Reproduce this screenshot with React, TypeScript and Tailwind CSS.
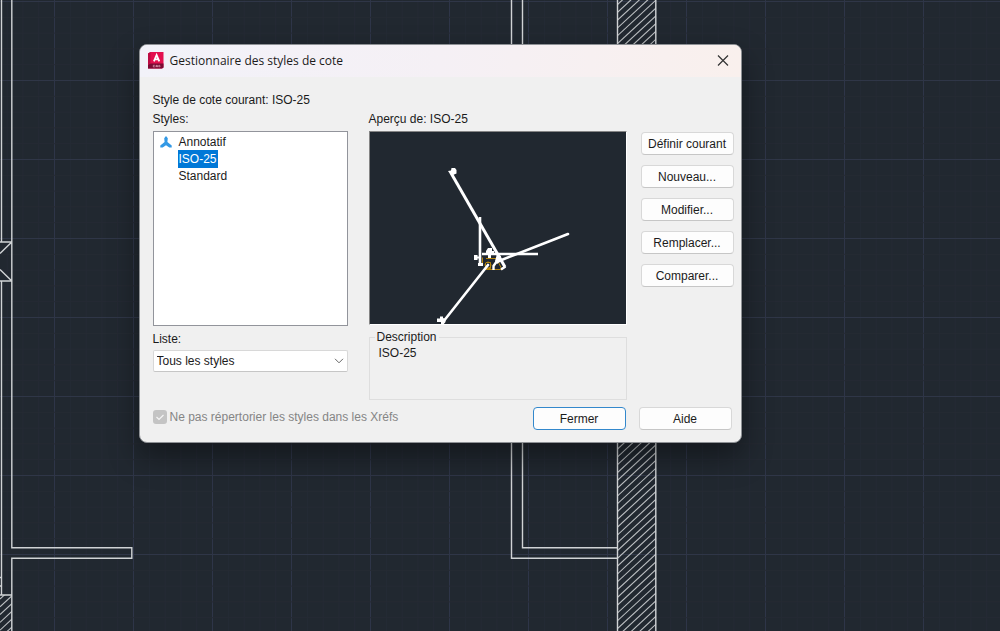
import { ReactNode } from "react";

const cols = Array.from({ length: 66 }, (_, i) => ({ at: -24.5 + i * 15.8, major: i % 5 === 0 }));
const rows = Array.from({ length: 42 }, (_, i) => ({ at: 1.5 + i * 15.8, major: i % 5 === 0 }));
const hatchLines = Array.from({ length: 86 }, (_, i) => i * 7.8);

function Drawing() {
  return (
    <svg className="absolute inset-0 h-full w-full" viewBox="0 0 1000 631" preserveAspectRatio="xMidYMid slice" aria-hidden="true">
      <defs>
        <clipPath id="left-wall">
          <path d="M0 595H12V631H0Z" />
        </clipPath>
        <clipPath id="right-wall">
          <path d="M617 0H656V631H617Z" />
        </clipPath>
      </defs>
      {cols.map((c) => (
        <path key={c.at} d={`M${c.at} 0V631`} stroke={c.major ? "#2e3548" : "#252b36"} />
      ))}
      {rows.map((r) => (
        <path key={r.at} d={`M0 ${r.at}H1000`} stroke={r.major ? "#2f3647" : "#262b34"} />
      ))}
      <g clipPath="url(#right-wall)" stroke="#bdc0c3" strokeWidth="1.1">
        {hatchLines.map((y) => (
          <path key={y} d={`M617 ${y + 5}l40 -37`} />
        ))}
      </g>
      <g clipPath="url(#left-wall)" stroke="#bdc0c3" strokeWidth="1.1">
        {hatchLines.slice(0, 8).map((y) => (
          <path key={y} d={`M0 ${y + 599}l13 -12`} />
        ))}
      </g>
      <g fill="none" stroke="#d0d3d5" strokeWidth="1.4">
        <path d="M617.5 0V631M655.8 0V631M511.5 0V558.3H617M522.5 0V547.7H617" />
        <path d="M11.8 0V547.7H131.8V558.3H11.8V631M1.5 0V242M1.5 281V595M0 242H11.8M0 281H11.8M0 253.5 11.8 242M0 269.5 11.8 281M0 595H11.8" />
        <path d="M0 577.5H2M0 586H2" />
      </g>
    </svg>
  );
}

function AppIcon() {
  return (
    <svg width="16" height="18" viewBox="0 0 16 18" aria-hidden="true">
      <path d="M0 1.5 2.5 0H15.5V15.5L14 16.5H0Z" fill="#e3104f" />
      <path d="M0 1.5 2.5 0V11L0 13Z" fill="#bc0b43" />
      <path d="M0 13 2.5 11.5H15.5V15.5L14 16.5H0Z" fill="#7b0a34" />
      <path d="M5.9 9.4 8.6 3 11.3 9.4M7 7.4H10.2" fill="none" stroke="#fff" strokeWidth="1.8" />
      <path d="M6.8 13.3H5.3V14.9H6.8M8 15.2V13.4H9.4V15.2M8 14.4H9.4M10.8 13.3H11.6L12.2 14.1 11.6 14.9H10.8Z" fill="none" stroke="#e6aabd" strokeWidth=".7" />
    </svg>
  );
}

function Preview() {
  return (
    <svg className="block w-full" viewBox="370 132 256 192" role="img" aria-label="ISO-25">
      <g fill="none" stroke="#b8860b" strokeWidth="1">
        <path d="M482.5 257.5V265M486 258.5H497M497 259.5 502 269.5H484" />
        <path d="M485.5 263.5V268.5H490.5V262.5H486.5" />
        <circle cx="488" cy="265" r="3" />
      </g>
      <g fill="none" stroke="#fff">
        <path d="M451 173 505 267" strokeWidth="3" />
        <path d="M480 217V265M482 254H538" strokeWidth="2.6" />
        <path d="M443 322 488 265M499 261 568 234" strokeWidth="2.6" strokeLinecap="round" />
        <path d="M493.5 270V266L497 261M501 269.5 505.5 266.5" strokeWidth="2.4" />
      </g>
      <g fill="#fff">
        <path d="M448 171 451 170.5 451.5 168H455L456.5 170V173.5L453 175 450 174Z" />
        <path d="M474 255H477.5V256.5H481V258.5H477.5V260H474ZM478 263H483V266H478Z" />
        <path d="M486 251 488 248H492V251H494V254H491V258H488V254H486ZM497 254 501 256 501 261 497 264 495 261Z" />
        <path d="M437 318.5H440V316.5H443V318L445.5 319V322L443 325H441V322H437Z" />
      </g>
    </svg>
  );
}

function DialogButton({ children, primary = false }: { children: ReactNode; primary?: boolean }) {
  return (
    <button
      type="button"
      className={
        primary
          ? "h-[23px] w-[93px] rounded border border-[#3388cc] bg-[#fdfdfd] text-center leading-4"
          : "h-[23px] w-[93px] rounded border border-[#d8d8d8] border-b-[#c6c6c6] bg-[#fdfdfd] text-center leading-4"
      }
    >
      {children}
    </button>
  );
}

export default function App() {
  return (
    <main className="relative flex min-h-screen justify-center overflow-hidden bg-[#212830] pt-11 pr-[120px] font-['Liberation_Sans',Arial,sans-serif] text-[12px] leading-4 text-[#1b1b1b]">
      <Drawing />
      <section
        role="dialog"
        aria-labelledby="title"
        className="relative w-[603px] self-start overflow-hidden rounded-lg border border-[#8e9195] bg-[#f0f0f0] shadow-[0_14px_30px_rgba(0,0,0,0.4)]"
      >
        <header className="flex h-8 items-center justify-between bg-linear-to-r from-[#f2f2f9] via-[#f5f0f5] to-[#f9f0ed] pr-3 pl-2">
          <div className="flex items-center gap-1.5">
            <AppIcon />
            <h1 id="title" className="font-['Open_Sans','Noto_Sans',sans-serif] text-[12px] leading-4">Gestionnaire des styles de cote</h1>
          </div>
          <button type="button" aria-label="Fermer la fenêtre">
            <svg width="12" height="12" viewBox="0 0 12 12" aria-hidden="true">
              <path d="M1 .5 11 10.500M11 .5 1 10.500" stroke="#333" strokeWidth="1.2" />
            </svg>
          </button>
        </header>

        <div className="pt-[15px] pr-[7px] pb-3 pl-[13px]">
          <p>Style de cote courant: ISO-25</p>
          <div className="mt-[3px] flex">
            <div className="w-[195px]">
              <p id="styles-label">Styles:</p>
              <ul role="listbox" aria-labelledby="styles-label" className="mt-1 h-[195px] border border-[#92949b] bg-white pt-px">
                <li role="option" aria-selected="false" className="flex h-[17px] items-center pl-1.5">
                  <svg width="12" height="12" viewBox="0 0 12 12" aria-hidden="true">
                    <path d="M6 0 7.8 2.3 7.4 6 11.7 9.5V11.5H9.3L6 9.2 2.7 11.5H.3V9.5L4.6 6 4.2 2.3Z" fill="#3399e5" />
                  </svg>
                  <span className="pl-[7px]">Annotatif</span>
                </li>
                <li role="option" aria-selected="true" className="flex h-[18px] pl-6">
                  <span className="bg-[#0078d7] px-px leading-[18px] text-white">ISO-25</span>
                </li>
                <li role="option" aria-selected="false" className="h-[17px] pl-[25px] leading-[17px]">Standard</li>
              </ul>
              <label htmlFor="list" className="mt-[5px] block">Liste:</label>
              <div className="relative mt-[3px]">
                <select id="list" className="block h-[22px] w-full appearance-none rounded-xs border border-[#d8d8d8] border-b-[#c6c6c6] bg-white pl-[3px]">
                  <option>Tous les styles</option>
                </select>
                <svg className="pointer-events-none absolute top-2 right-1" width="10" height="6" viewBox="0 0 10 6" aria-hidden="true">
                  <path d="M1 .8 5 4.8 9 .8" fill="none" stroke="#666" />
                </svg>
              </div>
            </div>

            <div className="ml-[21px] w-[258px]">
              <p>Aperçu de: ISO-25</p>
              <div className="mt-1 border border-t-[#858585] border-r-white border-b-white border-l-[#858585] bg-[#212830]">
                <Preview />
              </div>
              <fieldset className="mt-1 h-[71px] border border-[#dedede] px-[9px]">
                <legend className="-ml-1 px-0.5">Description</legend>
                <p>ISO-25</p>
              </fieldset>
            </div>

            <div className="ml-3.5 flex flex-col gap-2.5 pt-[21px]">
              <DialogButton>Définir courant</DialogButton>
              <DialogButton>Nouveau...</DialogButton>
              <DialogButton>Modifier...</DialogButton>
              <DialogButton>Remplacer...</DialogButton>
              <DialogButton>Comparer...</DialogButton>
            </div>
          </div>

          <footer className="mt-[7px] flex items-start justify-between pr-0.5">
            <label className="flex items-center gap-[3px] pt-0.5 text-[#858585]">
              <span className="relative flex">
                <input type="checkbox" checked disabled readOnly className="size-3.5 appearance-none rounded-[3px] bg-[#c4c4c4]" />
                <svg className="pointer-events-none absolute inset-0" width="14" height="14" viewBox="0 0 14 14" aria-hidden="true">
                  <path d="M3.5 7 6 9.5 10.5 5" fill="none" stroke="#f5f5f5" strokeWidth="1.2" />
                </svg>
              </span>
              Ne pas répertorier les styles dans les Xréfs
            </label>
            <div className="flex gap-[13px]">
              <DialogButton primary>Fermer</DialogButton>
              <DialogButton>Aide</DialogButton>
            </div>
          </footer>
        </div>
      </section>
    </main>
  );
}
